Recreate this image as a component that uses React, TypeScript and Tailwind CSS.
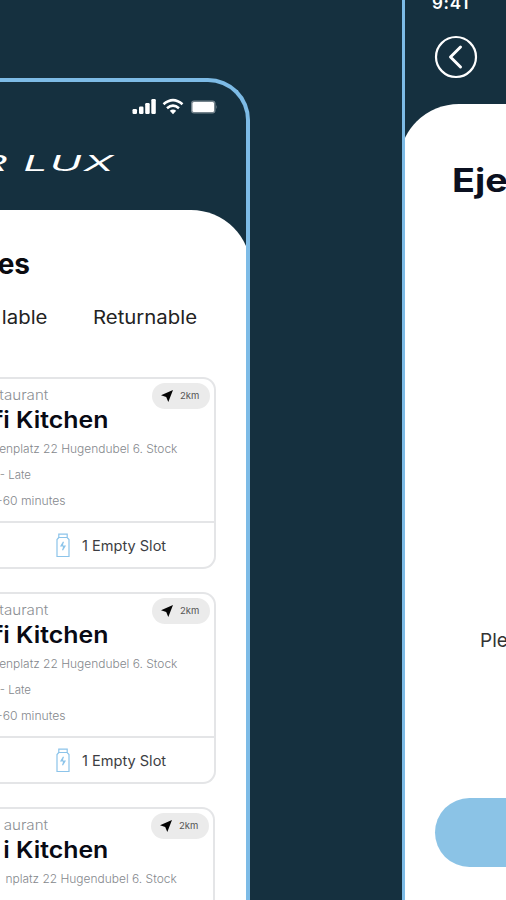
import React from 'react';

const BASE_FONT = "font-['Inter','Liberation_Sans',sans-serif]";

const StatusIcons: React.FC = () => (
  <svg className="block" width="86" height="18" viewBox="0 0 86 18" fill="none">
    {/* Signal */}
    <g fill="#fff">
      <rect x="0.500" y="11" width="4.500" height="5" rx="1.200" />
      <rect x="7" y="8.500" width="4.500" height="7.500" rx="1.200" />
      <rect x="13.200" y="5" width="4.500" height="11" rx="1.200" />
      <rect x="19.300" y="1" width="4.500" height="15" rx="1.200" />
    </g>
    {/* Wifi */}
    <g stroke="#fff" strokeWidth="2.6">
      <path d="M31.500 6.300Q41 -2 50.500 6.300" />
      <path d="M35 10.200Q41 5 47 10.200" />
    </g>
    <path d="M37.800 12.700Q41 10.200 44.200 12.700L41 16.200Z" fill="#fff" />
    {/* Battery */}
    <rect x="59" y="2.500" width="24.500" height="13" rx="3" fill="#74838c" />
    <rect x="60.500" y="4" width="21.500" height="10" rx="1.500" fill="#fff" />
    <path d="M84.300 6.700Q86 9 84.300 11.300Z" fill="#74838c" />
  </svg>
);

const SlotIcon: React.FC = () => (
  <svg className="block" width="14" height="25" viewBox="0 0 14 25" fill="none" stroke="#8cc4ea" strokeWidth="1.2">
    <path d="M2.800 4.500V1.200H11.200V4.500" />
    <path d="M2.800 4.500L1 6.500V23.500H13V6.500L11.200 4.500Z" />
    <path d="M7.500 8.800L5 13H9L6.500 17.200" fill="#8cc4ea" />
  </svg>
);

const ArrowIcon: React.FC = () => (
  <svg className="block" width="12" height="12" viewBox="0 0 12 12">
    <path d="M12 0L0 5.200L5.200 7L7.300 12Z" fill="#050505" />
  </svg>
);

interface StationProps {
  kind: string;
  name: string;
  address: string;
  className?: string;
}

const StationCard: React.FC<StationProps> = ({ kind, name, address, className = 'w-[216px]' }) => (
  <div className={`${className} h-[192px] shrink-0 border-2 border-l-0 border-[#e4e5e7] rounded-r-[13px] flex flex-col whitespace-nowrap`}>
    <div className="h-[144px] shrink-0 border-b-2 border-[#e4e5e7] flex flex-col">
      <div className="h-[31px] flex justify-between pr-1 pt-1">
        <div className="w-12 flex justify-end pt-[2px] text-[14px] leading-5 text-[#8c8f94] font-light">
          <span className="origin-right scale-x-[1.080]">{kind}</span>
        </div>
        <div className="w-[58px] h-[26px] rounded-full bg-[#ebebeb] flex items-center pl-[9px] gap-[7px]">
          <ArrowIcon />
          <span className="text-[9.500px] leading-3 text-[#555]">2km</span>
        </div>
      </div>
      <div className="w-[108px] h-[26px] -mt-[3px] flex justify-end text-[23px] leading-[26px] font-semibold text-[#080a14]">
        <span className="origin-right scale-x-[1.080]">{name}</span>
      </div>
      <div className="w-[177px] h-4 mt-[8px] flex justify-end text-[11.5px] leading-4 font-light text-[#85888d]">
        <span className="origin-right scale-x-[1.040]">{address}</span>
      </div>
      <div className="w-[31px] h-4 mt-[10px] flex justify-end text-[11.5px] leading-4 font-light text-[#85888d]">
        <span>- Late</span>
      </div>
      <div className="w-[66px] h-4 mt-[10px] flex justify-end text-[11.5px] leading-4 font-light text-[#85888d]">
        <span className="origin-right scale-x-[1.060]">-60 minutes</span>
      </div>
    </div>
    <div className="flex-1 flex items-center pl-14 gap-3">
      <SlotIcon />
      <span className="pt-px text-[14px] leading-5 origin-left scale-x-[1.040] text-[#3c3d42]">1 Empty Slot</span>
    </div>
  </div>
);

const App: React.FC = () => {
  return (
    <div className={`w-[506px] h-[900px] overflow-hidden bg-[#15303f] flex justify-between ${BASE_FONT}`}>
      {/* Stations screen */}
      <div className="w-[250px] h-[822px] mt-[78px] shrink-0 overflow-hidden border-t-4 border-r-4 border-[#7dbbe6] rounded-tr-[42px] flex flex-col">
        <div className="h-[128px] shrink-0 flex flex-col">
          <div className="pt-4 pl-[132px]">
            <StatusIcons />
          </div>
          <div className="w-[115px] mt-[34px] h-7 flex justify-end text-white">
            <span className="text-[21px] leading-7 italic tracking-[1px] whitespace-nowrap origin-right scale-x-[2.050]">R LUX</span>
          </div>
        </div>
        <div className="-mr-[5px] flex-1 bg-white rounded-tr-[60px] flex flex-col">
          <h1 className="w-[30px] h-9 mt-[36px] flex justify-end text-[28px] leading-9 font-bold text-[#0b0b10]">es</h1>
          <div className="h-6 mt-[23px] flex shrink-0 text-[18.500px] leading-6 text-[#222]">
            <div className="w-[47px] flex justify-end shrink-0">
              <span className="origin-right scale-x-110">lable</span>
            </div>
            <span className="ml-[46px] origin-left scale-x-[1.100]">Returnable</span>
          </div>
          <div className="mt-12 flex flex-col gap-[23px]">
            <StationCard kind="taurant" name="fi Kitchen" address="enplatz 22 Hugendubel 6. Stock" />
            <StationCard kind="taurant" name="fi Kitchen" address="enplatz 22 Hugendubel 6. Stock" />
            <StationCard kind="aurant" name="i Kitchen" address="nplatz 22 Hugendubel 6. Stock" className="w-[215px]" />
          </div>
        </div>
      </div>

      {/* Eject screen */}
      <div className="w-[104px] h-[900px] shrink-0 overflow-hidden border-l-[3px] border-[#7dbbe6] flex flex-col">
        <div className="h-[104px] shrink-0 pl-[27px] flex flex-col">
          <span className="-mt-[7px] h-5 text-[17px] leading-5 tracking-[0.700px] font-semibold text-white">9:41</span>
          <svg className="block mt-[22px] ml-[2px]" width="44" height="44" viewBox="0 0 44 44" fill="none" stroke="#fff">
            <circle cx="22" cy="22" r="20" strokeWidth="2.200" />
            <path d="M26.500 12L16.500 22L26.500 32" strokeWidth="3" strokeLinecap="round" strokeLinejoin="round" />
          </svg>
        </div>
        <div className="-ml-[6px] flex-1 bg-white rounded-tl-[60px] flex flex-col">
          <h2 className="ml-[53px] h-11 mt-[55px] text-[32px] leading-[44px] origin-left scale-x-[1.180] font-bold text-[#0b1020]">Eje</h2>
          <p className="pl-[81px] h-6 mt-[426px] text-[19px] leading-6 text-[#333]">Ple</p>
          <div className="ml-9 mt-[145px] h-[69px] shrink-0 bg-[#8bc3e6] rounded-l-full"></div>
        </div>
      </div>
    </div>
  );
};

export default App;
